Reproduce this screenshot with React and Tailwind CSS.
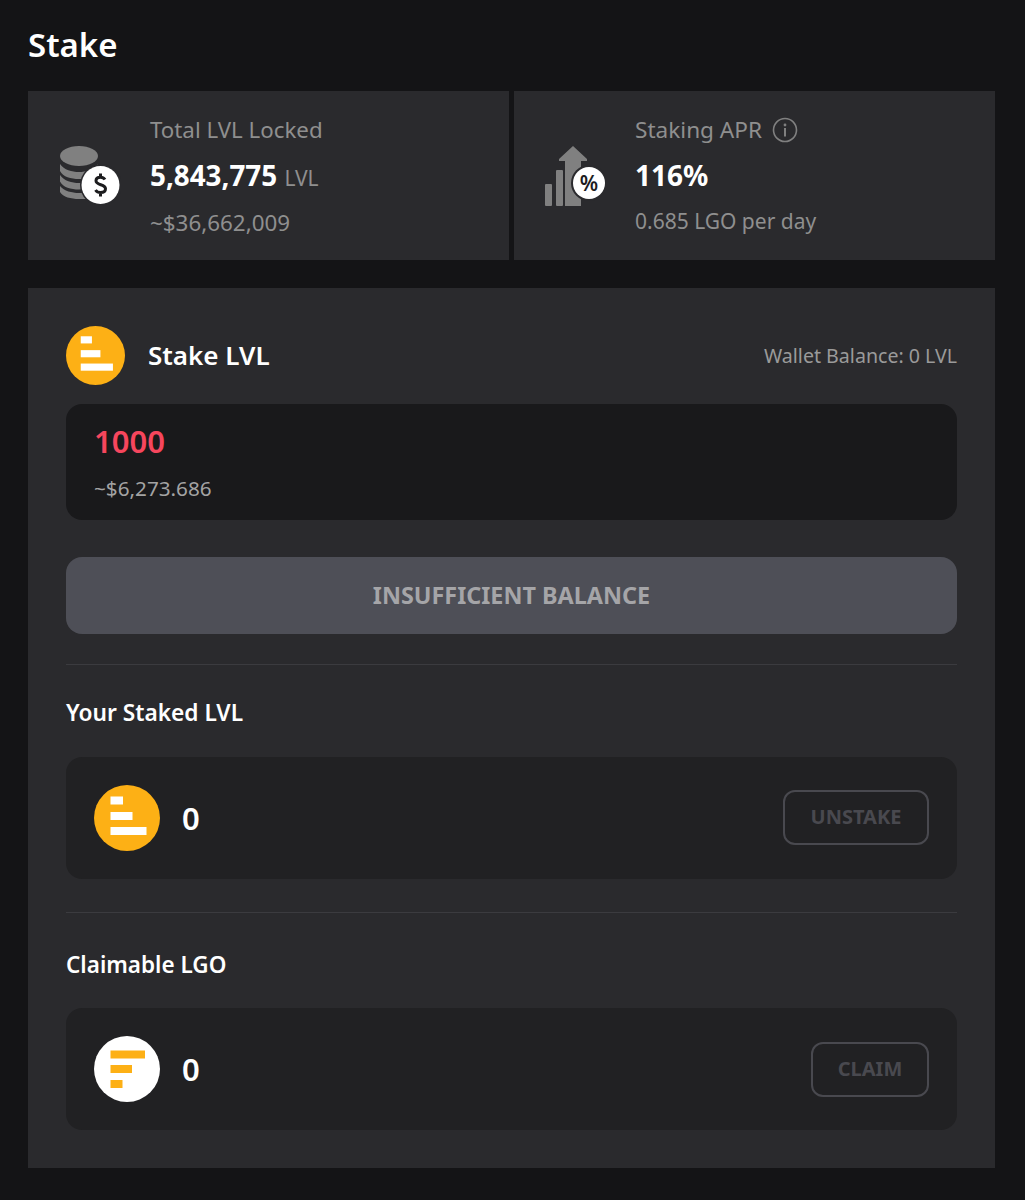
import React from 'react';

const font = "font-['Noto_Sans',sans-serif]";

function CoinsIcon() {
  return (
    <svg width="62" height="60" viewBox="0 0 62 60" className="shrink-0">
      <g fill="#808080">
        <ellipse cx="20" cy="10" rx="19" ry="10" />
        <path d="M1 18c4 6 12 8 19 8s15-2 19-8v7c-3 6-11 8-19 8S4 31 1 25z" />
        <path d="M1 29c4 6 12 8 19 8 3 0 7-.4 10-1.500l2 6c-4 1-8 2-12 2-8 0-16-2-19-8z" />
        <path d="M1 40c4 5 12 7 19 7 3 0 7-.4 10-1l3 6c-4 1-9 1-13 1-8 0-16-2-19-7z" />
      </g>
      <circle cx="42" cy="39" r="21" fill="#2a2a2d" />
      <circle cx="41.500" cy="39" r="19" fill="#fff" />
      <path d="M46 33.500c-1-1.500-2.500-2.300-4.500-2.300-2.800 0-4.500 1.500-4.500 3.600 0 4.900 9.500 3 9.500 8 0 2.200-2 3.700-5 3.700-2.200 0-4-1-5-2.500M41.500 27.500v3.500M41.500 47v3.500" fill="none" stroke="#1c1c1e" strokeWidth="3" />
    </svg>
  );
}

function AprIcon() {
  return (
    <svg width="60" height="60" viewBox="0 0 60 60" className="shrink-0">
      <g fill="#808080">
        <rect x="0" y="38" width="7" height="22" rx="1" />
        <rect x="11" y="24" width="7" height="36" rx="1" />
        <path d="M28 0l14 13v2h-6v45H20V15h-6v-2z" />
      </g>
      <circle cx="44" cy="37" r="18" fill="#2a2a2d" />
      <circle cx="44" cy="37" r="16" fill="#fff" />
      <text x="44" y="44.500" textAnchor="middle" fontSize="21" fontWeight="600" fill="#1c1c1e" fontFamily="Noto Sans, sans-serif">%</text>
    </svg>
  );
}

function InfoIcon() {
  return (
    <svg width="26" height="26" viewBox="0 0 26 26">
      <circle cx="13" cy="13" r="11.500" fill="none" stroke="#808080" strokeWidth="1.600" />
      <circle cx="13" cy="8" r="1.400" fill="#808080" />
      <rect x="12" y="11" width="2" height="8.500" fill="#808080" />
    </svg>
  );
}

// round logo: bars stepping wider toward the bottom
function LvlLogo({ size }) {
  return (
    <svg width={size} height={size} viewBox="0 0 66 66" className="shrink-0">
      <circle cx="33" cy="33" r="33" fill="#fdb015" />
      <rect x="16.500" y="11.500" width="12.500" height="8" fill="#fff" />
      <rect x="16.500" y="27" width="22" height="8" fill="#fff" />
      <rect x="16.500" y="42" width="36" height="8" fill="#fff" />
    </svg>
  );
}

function LgoLogo() {
  return (
    <svg width="66" height="66" viewBox="0 0 66 66" className="shrink-0">
      <circle cx="33" cy="33" r="33" fill="#fff" />
      <rect x="16.500" y="14.500" width="34.500" height="8" fill="#fdb015" />
      <rect x="16.500" y="29" width="21.500" height="8" fill="#fdb015" />
      <rect x="16.500" y="44" width="12" height="8" fill="#fdb015" />
    </svg>
  );
}

function StatCard({ icon, gap, children }) {
  return (
    <div className={`flex-1 h-[169px] bg-[#2a2a2d] flex items-center pl-[31px] ${gap}`}>
      <div className="w-[62px] flex justify-start mt-[1px]">{icon}</div>
      <div className="flex flex-col">{children}</div>
    </div>
  );
}

function AssetRow({ logo, action, actionClass }) {
  return (
    <div className="h-[122px] bg-[#212123] rounded-[16px] flex items-center px-[28px]">
      {logo}
      <span className="ml-[22px] text-[31px] font-semibold text-white">0</span>
      <button className={`ml-auto h-[55px] border-2 border-[#49494f] rounded-[12px] text-[20px] font-bold text-[#49494f] ${actionClass}`}>
        {action}
      </button>
    </div>
  );
}

export default function App() {
  return (
    <div className={`${font} w-[1025px] h-[1200px] bg-[#141416] px-[28px] pt-[21px] overflow-hidden`}>
      <h1 className="text-[33px] leading-[48px] font-semibold text-white">Stake</h1>

      <div className="flex gap-[5px] mt-[22px] pr-[2px] w-[969px]">
        <StatCard icon={<CoinsIcon />} gap="gap-[29px]">
          <div className="mt-[2px] text-[22.300px] leading-[30px] text-[#8f8f8f]">Total LVL Locked</div>
          <div className="mt-[15px] leading-[30px] text-white text-[27.800px] font-bold">
            5,843,775 <span className="text-[21px] font-normal text-[#8f8f8f]">LVL</span>
          </div>
          <div className="mt-[15px] text-[22.400px] leading-[30px] text-[#8f8f8f]">~$36,662,009</div>
        </StatCard>
        <StatCard icon={<AprIcon />} gap="gap-[28px]">
          <div className="flex items-center gap-[10px] text-[22.600px] leading-[30px] text-[#8f8f8f]">
            Staking APR <InfoIcon />
          </div>
          <div className="mt-[15px] leading-[30px] text-white text-[28px] font-bold">116%</div>
          <div className="mt-[16px] text-[21px] leading-[30px] text-[#8f8f8f]">0.685 LGO per day</div>
        </StatCard>
      </div>

      <div className="mt-[28px] w-[967px] h-[880px] bg-[#2a2a2d] px-[38px] pt-[38px]">
        <div className="flex items-center h-[59px]">
          <LvlLogo size={59} />
          <span className="ml-[23px] text-[26px] font-semibold text-white">Stake LVL</span>
          <span className="ml-auto text-[19.600px] text-[#9a9a9a]">Wallet Balance: 0 LVL</span>
        </div>

        <div className="mt-[19px] h-[116px] bg-[#19191b] rounded-[16px] pl-[28px] pt-[16px]">
          <div className="text-[31px] leading-[42px] font-semibold text-[#f6465d]">1000</div>
          <div className="mt-[11px] text-[20.700px] leading-[30px] text-[#a3a3a3]">~$6,273.686</div>
        </div>

        <button className="mt-[37px] w-full h-[77px] bg-[#4e4f57] rounded-[16px] text-[23.400px] font-bold text-[#a5a5a8]">
          INSUFFICIENT BALANCE
        </button>

        <div className="mt-[30px] h-[1px] bg-[#3b3b3f]" />
        <div className="mt-[31px] text-[22.700px] leading-[34px] font-semibold text-white">Your Staked LVL</div>
        <div className="mt-[27px]">
          <AssetRow logo={<LvlLogo size={66} />} action="UNSTAKE" actionClass="w-[146px] mb-[2px]" />
        </div>

        <div className="mt-[33px] h-[1px] bg-[#3b3b3f]" />
        <div className="mt-[35px] text-[22.500px] leading-[34px] font-semibold text-white">Claimable LGO</div>
        <div className="mt-[26px]">
          <AssetRow logo={<LgoLogo />} action="CLAIM" actionClass="w-[118px]" />
        </div>
      </div>
    </div>
  );
}
